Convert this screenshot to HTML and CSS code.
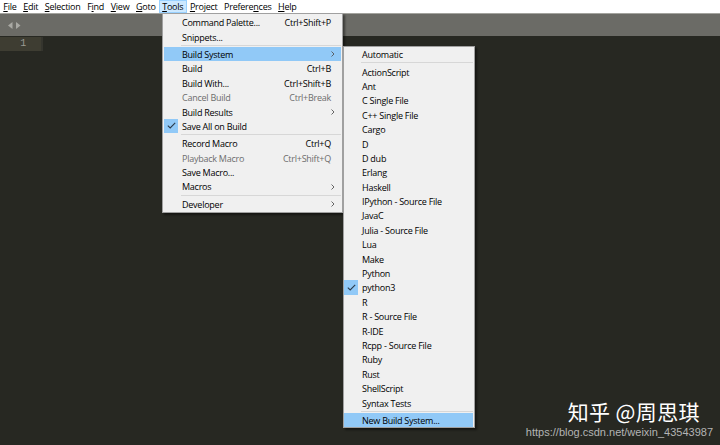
FILE: index.html
```html
<!DOCTYPE html>
<html>
<head>
<meta charset="utf-8">
<link rel="stylesheet" href="styles.css">
</head>
<body>
<div class="app">
  <div class="menubar">
    <span class="mi"><u>F</u>ile</span>
    <span class="mi"><u>E</u>dit</span>
    <span class="mi"><u>S</u>election</span>
    <span class="mi">F<u>i</u>nd</span>
    <span class="mi"><u>V</u>iew</span>
    <span class="mi"><u>G</u>oto</span>
    <span class="mi active"><u>T</u>ools</span>
    <span class="mi"><u>P</u>roject</span>
    <span class="mi">Prefere<u>n</u>ces</span>
    <span class="mi"><u>H</u>elp</span>
  </div>
  <div class="tabbar">
    <span class="arrows">
      <svg width="15" height="9" viewBox="0 0 15 9"><path d="M5.5 1 L1 4.5 L5.5 8Z" fill="#a9a9a4"/><path d="M9 1 L13.5 4.5 L9 8Z" fill="#a9a9a4"/></svg>
    </span>
  </div>
  <div class="editor">
    <div class="gutter">
      <div class="ln current">1</div>
    </div>
    <div class="code">
      <div class="line current"></div>
    </div>
  </div>

  <div class="menu tools">
    <div class="row"><span class="lbl">Command Palette...</span><span class="sc">Ctrl+Shift+P</span></div>
    <div class="row"><span class="lbl">Snippets...</span></div>
    <div class="sep"></div>
    <div class="row hl"><span class="lbl">Build System</span><span class="arr"><svg width="4" height="6" viewBox="0 0 4 6"><path d="M0.5 0.5 L3 3 L0.5 5.5" fill="none" stroke="#555" stroke-width="0.9"/></svg></span></div>
    <div class="row"><span class="lbl">Build</span><span class="sc">Ctrl+B</span></div>
    <div class="row"><span class="lbl">Build With...</span><span class="sc">Ctrl+Shift+B</span></div>
    <div class="row dis"><span class="lbl">Cancel Build</span><span class="sc">Ctrl+Break</span></div>
    <div class="row"><span class="lbl">Build Results</span><span class="arr"><svg width="4" height="6" viewBox="0 0 4 6"><path d="M0.5 0.5 L3 3 L0.5 5.5" fill="none" stroke="#555" stroke-width="0.9"/></svg></span></div>
    <div class="row"><span class="chk"><svg width="9" height="7" viewBox="0 0 9 7"><path d="M0.8 3.6 L3.2 6 L8.2 0.8" fill="none" stroke="#2b3a4a" stroke-width="1.1"/></svg></span><span class="lbl">Save All on Build</span></div>
    <div class="sep"></div>
    <div class="row"><span class="lbl">Record Macro</span><span class="sc">Ctrl+Q</span></div>
    <div class="row dis"><span class="lbl">Playback Macro</span><span class="sc">Ctrl+Shift+Q</span></div>
    <div class="row"><span class="lbl">Save Macro...</span></div>
    <div class="row"><span class="lbl">Macros</span><span class="arr"><svg width="4" height="6" viewBox="0 0 4 6"><path d="M0.5 0.5 L3 3 L0.5 5.5" fill="none" stroke="#555" stroke-width="0.9"/></svg></span></div>
    <div class="sep"></div>
    <div class="row"><span class="lbl">Developer</span><span class="arr"><svg width="4" height="6" viewBox="0 0 4 6"><path d="M0.5 0.5 L3 3 L0.5 5.5" fill="none" stroke="#555" stroke-width="0.9"/></svg></span></div>
  </div>

  <div class="menu sub">
    <div class="row"><span class="lbl">Automatic</span></div>
    <div class="sep"></div>
    <div class="row"><span class="lbl">ActionScript</span></div>
    <div class="row"><span class="lbl">Ant</span></div>
    <div class="row"><span class="lbl">C Single File</span></div>
    <div class="row"><span class="lbl">C++ Single File</span></div>
    <div class="row"><span class="lbl">Cargo</span></div>
    <div class="row"><span class="lbl">D</span></div>
    <div class="row"><span class="lbl">D dub</span></div>
    <div class="row"><span class="lbl">Erlang</span></div>
    <div class="row"><span class="lbl">Haskell</span></div>
    <div class="row"><span class="lbl">IPython - Source File</span></div>
    <div class="row"><span class="lbl">JavaC</span></div>
    <div class="row"><span class="lbl">Julia - Source File</span></div>
    <div class="row"><span class="lbl">Lua</span></div>
    <div class="row"><span class="lbl">Make</span></div>
    <div class="row"><span class="lbl">Python</span></div>
    <div class="row"><span class="chk"><svg width="9" height="7" viewBox="0 0 9 7"><path d="M0.8 3.6 L3.2 6 L8.2 0.8" fill="none" stroke="#2b3a4a" stroke-width="1.1"/></svg></span><span class="lbl">python3</span></div>
    <div class="row"><span class="lbl">R</span></div>
    <div class="row"><span class="lbl">R - Source File</span></div>
    <div class="row"><span class="lbl">R-IDE</span></div>
    <div class="row"><span class="lbl">Rcpp - Source File</span></div>
    <div class="row"><span class="lbl">Ruby</span></div>
    <div class="row"><span class="lbl">Rust</span></div>
    <div class="row"><span class="lbl">ShellScript</span></div>
    <div class="row"><span class="lbl">Syntax Tests</span></div>
    <div class="sep"></div>
    <div class="row hl"><span class="lbl">New Build System...</span></div>
  </div>

  <div class="watermark">
    <div class="wm-title">知乎 @周思琪</div>
    <div class="wm-url">https://blog.csdn.net/weixin_43543987</div>
  </div>
</div>
</body>
</html>
```
FILE: styles.css
```css
* { box-sizing: border-box; }
html, body { margin: 0; padding: 0; }
body {
  width: 720px;
  height: 445px;
  overflow: hidden;
  background: #272822;
  font-family: "Open Sans", "Noto Sans", sans-serif;
  font-size: 9px;
  letter-spacing: -0.25px;
  color: #000;
}
.app {
  position: relative;
  width: 720px;
  height: 445px;
  display: flex;
  flex-direction: column;
}
.menubar {
  height: 13px;
  background: #fff;
  display: flex;
  align-items: center;
  padding-left: 0;
  line-height: 13px;
}
.mi {
  padding: 0 3.3px;
  height: 13px;
  white-space: nowrap;
}
.mi u { text-decoration: underline; text-underline-offset: 1px; }
.mi.active {
  background: #cce8ff;
  outline: 1px solid #99d1ff;
  outline-offset: -1px;
}
.tabbar {
  height: 23px;
  background: #6b6b66;
  border-top: 1px solid #a3a39e;
  display: flex;
  align-items: center;
  padding-left: 7px;
}
.arrows { display: flex; align-items: center; }
.editor {
  flex: 1;
  display: flex;
  padding-top: 1px;
}
.gutter {
  width: 41px;
}
.ln {
  height: 14px;
  line-height: 14px;
  text-align: right;
  padding-right: 15px;
  color: #9a9a92;
  font-family: "Liberation Mono", monospace;
  font-size: 10px;
}
.ln.current { background: #3e3d32; }
.code { flex: 1; border-left: 2px solid #35352e; height: 14px; }

.menu {
  position: absolute;
  background: #f0f0f0;
  border: 1px solid #a0a0a0;
  box-shadow: 2px 2px 2px rgba(0,0,0,0.45);
  color: #000;
}
.tools {
  left: 162px;
  top: 13px;
  width: 181px;
  padding: 1px 1px 1px 1px;
}
.sub {
  left: 343px;
  top: 46px;
  width: 132px;
  padding: 0 1px 0 0;
}
.row {
  position: relative;
  height: 14.4px;
  display: flex;
  align-items: center;
  padding-left: 18px;
  padding-right: 10px;
  padding-top: 1px;
  white-space: nowrap;
}
.row .lbl { flex: 1; }
.row .sc { text-align: right; }
.row .arr { display: flex; align-items: center; margin-right: -4px; }
.row.hl { background: #91c9f7; }
.row.dis { color: #6d6d6d; }
.chk {
  position: absolute;
  left: 0;
  top: 0;
  width: 14px;
  height: 14.4px;
  background: #91c9f7;
  display: flex;
  align-items: center;
  justify-content: center;
}
.sep {
  height: 3px;
  display: flex;
  align-items: center;
  padding-left: 17px;
}
.sep::after {
  content: "";
  flex: 1;
  height: 1px;
  background: #d7d7d7;
}
.watermark {
  position: absolute;
  right: 7px;
  bottom: 6px;
  display: flex;
  flex-direction: column;
  align-items: flex-end;
  gap: 4px;
  letter-spacing: 0;
}
.wm-title {
  font-family: "Noto Sans CJK SC", sans-serif;
  font-size: 21px;
  letter-spacing: 0.4px;
  color: #fff;
  line-height: 22px;
  margin-right: 13px;
}
.wm-url {
  font-family: "Liberation Sans", sans-serif;
  font-size: 11px;
  color: #b4b4b4;
  line-height: 13px;
}
```
